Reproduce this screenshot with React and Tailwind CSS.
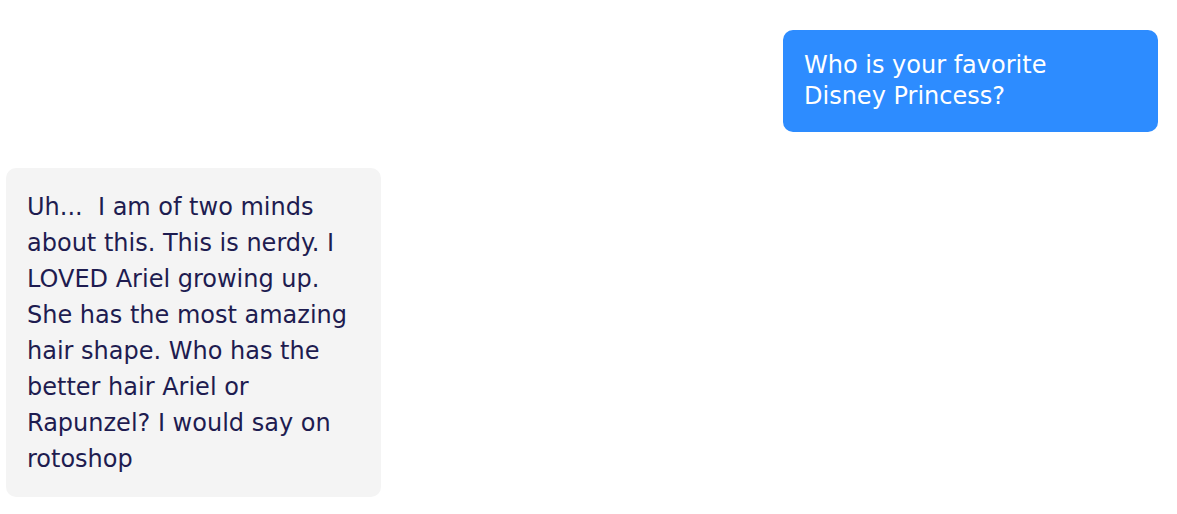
export default function App() {
  const reply = [
    'Uh...  I am of two minds',
    'about this. This is nerdy. I',
    'LOVED Ariel growing up.',
    'She has the most amazing',
    'hair shape. Who has the',
    'better hair Ariel or',
    'Rapunzel? I would say on',
    'rotoshop',
  ]

  return (
    <div className="min-h-screen bg-white font-['DejaVu_Sans',sans-serif]">
      <div className="flex flex-col pt-[30px] pl-[6px] pr-[19px]">
        {/* outgoing */}
        <div className="self-end w-[375px] bg-[#2d8cff] rounded-[10px] px-[21px] py-[20px] text-white text-[24px] leading-[31px]">
          <div>Who is your favorite</div>
          <div>Disney Princess?</div>
        </div>

        {/* incoming */}
        <div className="self-start mt-[36px] w-[375px] bg-[#f4f4f4] rounded-[10px] px-[21px] pt-[21px] pb-[20px] text-[#1e1c50] text-[24px] leading-[36px]">
          {reply.map((line, i) => (
            <div key={i} className="whitespace-pre">{line}</div>
          ))}
        </div>
      </div>
    </div>
  )
}
